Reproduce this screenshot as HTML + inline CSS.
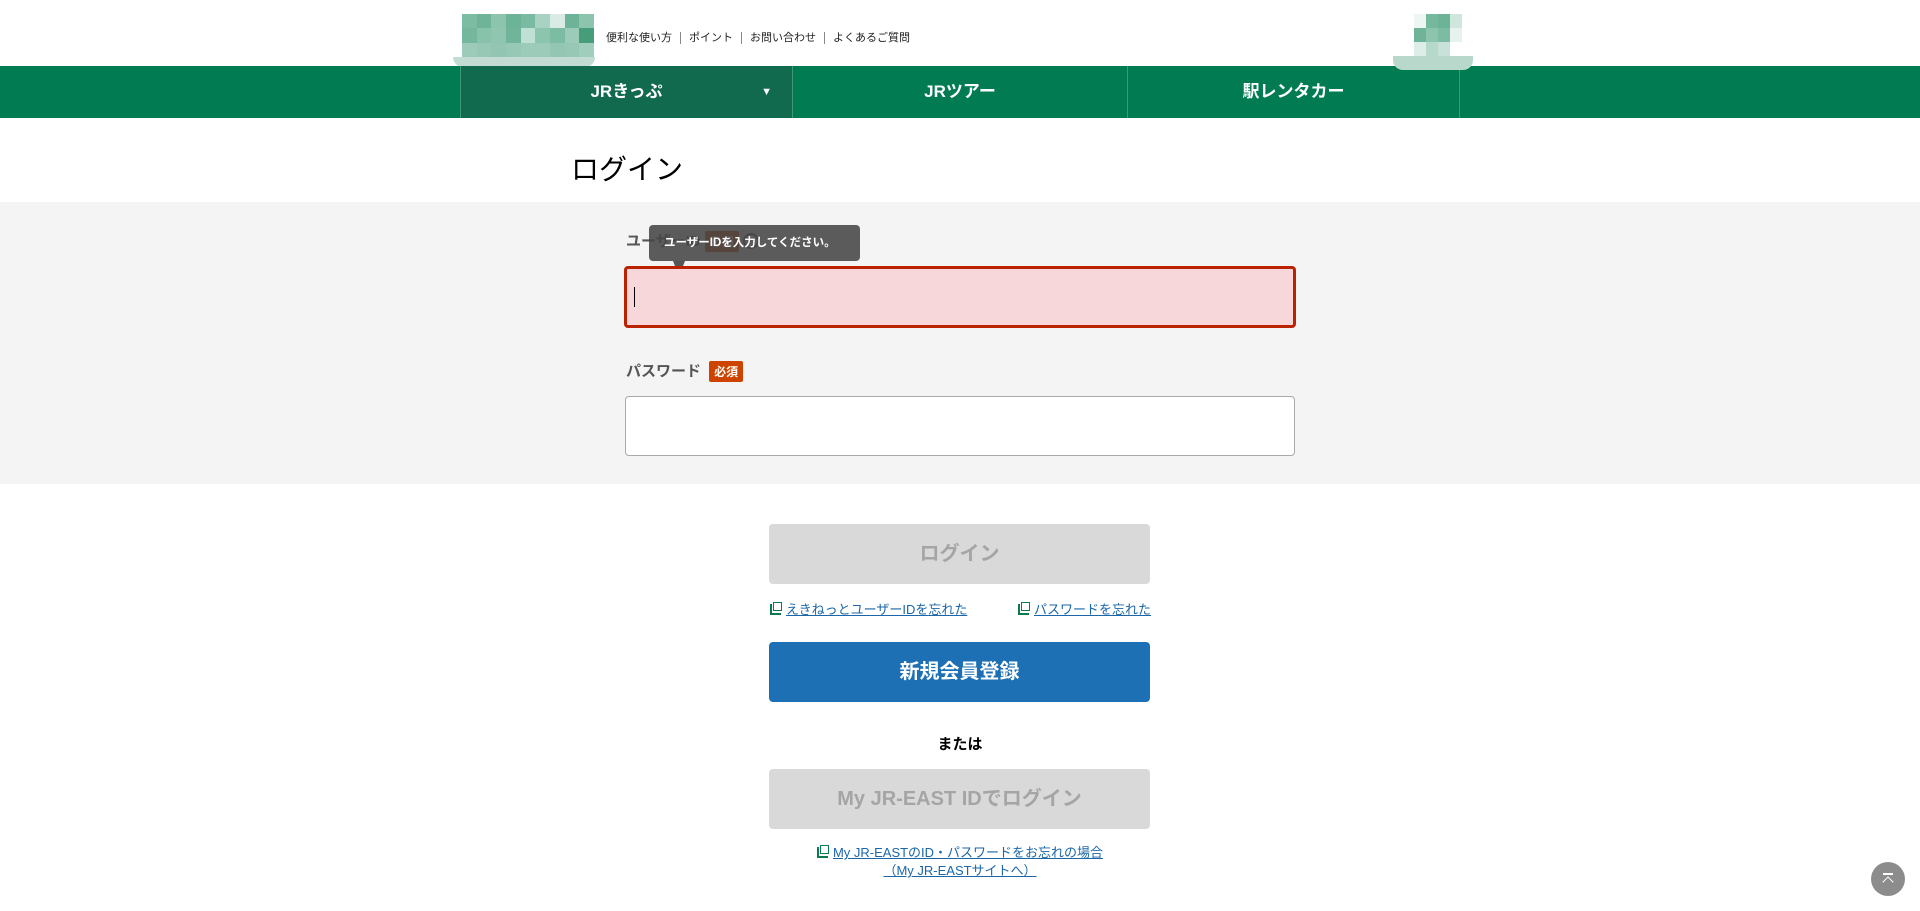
<!DOCTYPE html>
<html><head><meta charset="utf-8"><style>
*{margin:0;padding:0;box-sizing:border-box}
body{width:1920px;height:911px;overflow:hidden;background:#fff;font-family:"Liberation Sans","Noto Sans CJK JP",sans-serif;position:relative;color:#000}
.a{position:absolute}
.nav{position:absolute;left:0;top:66px;width:1920px;height:52px;background:#007b52}
.nav div{position:absolute;top:0;height:52px;color:#fff;font-weight:bold;font-size:17px;line-height:52px;text-align:center;border-left:1px solid #3a9a78}
.top a{color:#222;font-size:11px;text-decoration:none;padding:0 8px;border-left:1px solid #888}
.lbl{font-size:15px;font-weight:bold;color:#555}
.badge{display:inline-block;background:#cc4400;color:#fff;font-size:12px;font-weight:bold;padding:2px 5px;border-radius:2px}
.btn{position:absolute;left:769px;width:381px;height:60px;border-radius:4px;text-align:center;line-height:60px;font-weight:bold;font-size:20px}
.lk{color:#1a66a8;text-decoration:underline;font-size:13px}
.ic{display:inline-block;width:11px;height:11px;border:2px solid #0a7a4f;position:relative;margin-right:5px;vertical-align:-1px;border-top:none;border-right:none}
.ic:after{content:"";position:absolute;left:1px;top:-2px;width:7px;height:7px;border:1.5px solid #0a7a4f;background:#fff}
</style></head><body>
<div class="a" style="left:462px;top:14px;width:132px;height:43px;display:grid;grid-template-columns:repeat(9,1fr);grid-template-rows:repeat(3,1fr)">
<i style="background:#7bbca3"></i><i style="background:#6fb399"></i><i style="background:#8cc4ae"></i><i style="background:#6cb497"></i><i style="background:#7ab9a2"></i><i style="background:#a8d2c2"></i><i style="background:#d9ebe4"></i><i style="background:#6db397"></i><i style="background:#8cc4ae"></i>
<i style="background:#74b79d"></i><i style="background:#88c2ab"></i><i style="background:#90c6b1"></i><i style="background:#70b59a"></i><i style="background:#bfe0d4"></i><i style="background:#8cc4ae"></i><i style="background:#7bbca3"></i><i style="background:#9ccbb9"></i><i style="background:#479d7a"></i>
<i style="background:#9ccbb9"></i><i style="background:#96c8b5"></i><i style="background:#92c6b2"></i><i style="background:#96c8b5"></i><i style="background:#9ccbb9"></i><i style="background:#9ccbb9"></i><i style="background:#94c7b3"></i><i style="background:#96c8b5"></i><i style="background:#a0cdbc"></i>
</div>
<div class="a" style="left:453px;top:57px;width:142px;height:10px;background:#c2dbd3;border-radius:0 0 30px 30px"></div>
<div class="a" style="left:1414px;top:14px;width:48px;height:42px;display:grid;grid-template-columns:repeat(4,1fr);grid-template-rows:repeat(3,1fr)">
<i style="background:#eef6f3"></i><i style="background:#76b89e"></i><i style="background:#6db397"></i><i style="background:#cfe6dd"></i>
<i style="background:#6fb399"></i><i style="background:#8cc4ae"></i><i style="background:#7bbca3"></i><i style="background:#e7f2ee"></i>
<i style="background:#dceee7"></i><i style="background:#b5d9cb"></i><i style="background:#c9e2d9"></i><i style="background:#fff"></i>
</div>
<div class="a" style="left:1393px;top:56px;width:80px;height:14px;background:#b8d8cc;border-radius:0 0 10px 10px;z-index:2"></div>
<div class="a top" style="left:598px;top:30px;line-height:14px"><a style="border:none">便利な使い方</a><a>ポイント</a><a>お問い合わせ</a><a>よくあるご質問</a></div>
<div class="nav">
<div style="left:460px;width:332px;background:#126a4e">JRきっぷ<span style="position:absolute;right:20px;font-size:11px">▼</span></div>
<div style="left:792px;width:335px">JRツアー</div>
<div style="left:1127px;width:333px;border-right:1px solid #3a9a78">駅レンタカー</div>
</div>
<div class="a" style="left:571px;top:148px;font-size:28px">ログイン</div>
<div class="a" style="left:0;top:202px;width:1920px;height:282px;background:#f4f4f4"></div>
<div class="a lbl" style="left:626px;top:230px">ユーザーID <span class="badge">必須</span> <span style="display:inline-block;width:16px;height:16px;border:2px solid #555;border-radius:50%;vertical-align:-3px"></span></div>
<div class="a" style="left:649px;top:225px;width:211px;height:36px;background:rgba(70,70,70,.88);border-radius:4px;color:#fff;font-size:11.5px;font-weight:bold;line-height:36px;padding-left:15px">ユーザーIDを入力してください。</div>
<div class="a" style="left:673px;top:261px;border-left:6px solid transparent;border-right:6px solid transparent;border-top:15px solid #555"></div>
<div class="a" style="left:624px;top:266px;width:672px;height:62px;background:#f8d7da;border:3px solid #bb2200;border-radius:4px"></div>
<div class="a" style="left:634px;top:287px;width:1px;height:20px;background:#000"></div>
<div class="a lbl" style="left:626px;top:360px">パスワード <span class="badge" style="margin-left:4px">必須</span></div>
<div class="a" style="left:625px;top:396px;width:670px;height:60px;background:#fff;border:1px solid #aaa;border-radius:4px"></div>
<div class="btn" style="top:524px;background:#d9d9d9;color:#a5a5a5">ログイン</div>
<div class="a" style="left:770px;top:599px"><span class="ic"></span><span class="lk">えきねっとユーザーIDを忘れた</span></div>
<div class="a" style="left:1018px;top:599px"><span class="ic"></span><span class="lk">パスワードを忘れた</span></div>
<div class="btn" style="top:642px;background:#1c70b3;color:#fff">新規会員登録</div>
<div class="a" style="left:0;width:1920px;top:733px;text-align:center;font-weight:bold;font-size:15px">または</div>
<div class="btn" style="top:769px;background:#d9d9d9;color:#a5a5a5">My JR-EAST IDでログイン</div>
<div class="a" style="left:0;width:1920px;top:844px;text-align:center;line-height:18px"><span class="ic"></span><span class="lk">My JR-EASTのID・パスワードをお忘れの場合</span><br><span class="lk">（My JR-EASTサイトへ）</span></div>
<div class="a" style="left:1871px;top:862px;width:34px;height:34px;border-radius:50%;background:#8c8c8c"></div>
<div class="a" style="left:1883px;top:873px;width:10px;height:1.5px;background:#fff"></div>
<div class="a" style="left:1884px;top:878px;width:8px;height:8px;border-left:1.5px solid #fff;border-top:1.5px solid #fff;transform:rotate(45deg)"></div>
</body></html>
